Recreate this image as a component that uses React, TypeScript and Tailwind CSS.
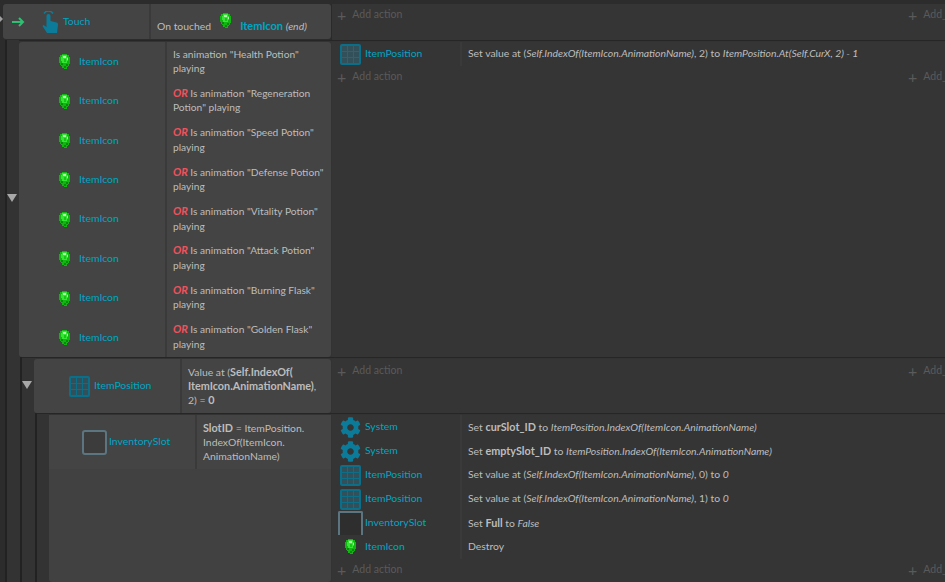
import type { ReactNode } from "react"
import { FaCog } from "react-icons/fa"

function Gem() {
  return (
    <svg width="11" height="15" viewBox="0 0 11 15" className="shrink-0" shapeRendering="crispEdges">
      <path d="M3 0h5v1h2v2h1v7h-1v2H9v1H8v2H5v-1H3v-2H2v-1H1V9H0V3h1V1h2z" fill="#12b512" />
      <path d="M3 1h5v2h1v4H8v2H3V7H2V3h1z" fill="#35e435" />
      <path d="M4 2h3v2H4zM8 4h1v2H8z" fill="#b6f9ae" />
      <path d="M2 9h2v2H2zM7 10h2v2H7zM5 12h2v2H5z" fill="#0a8a0a" />
      <path d="M5 5h2v3H5z" fill="#16c516" />
    </svg>
  )
}

function GridIcon() {
  return (
    <svg width="21" height="21" viewBox="0 0 21 21" className="shrink-0">
      <rect width="21" height="21" rx="2" fill="#0b6f8a" />
      {[2, 8, 14].map((y) =>
        [2, 8, 14].map((x) => <rect key={`${x}-${y}`} x={x} y={y} width="5" height="5" fill="#31505a" />),
      )}
    </svg>
  )
}

function SlotIcon({ small }: { small?: boolean }) {
  return (
    <div
      className={
        small
          ? "h-[24px] w-[25px] shrink-0 rounded-t-[2px] border-x-2 border-t-2 border-[#5b7681] bg-[#2e2e2e]"
          : "h-[25px] w-[25px] shrink-0 rounded-[3px] border-2 border-[#5b7681] bg-[#3c3c3c]"
      }
    />
  )
}

function TouchIcon() {
  return (
    <svg width="18" height="22" viewBox="0 0 18 22" className="shrink-0">
      <path d="M3 2.5a5.300 5.300 0 0 1 9 0" fill="none" stroke="#0c7b99" strokeWidth="1.500" />
      <path d="M5.500 5a2 2 0 0 1 4 0v5l6 1.500c1 .3 1.500 1 1.500 2L16 22H6L1.500 15l1-1 3 2z" fill="#0c7b99" />
    </svg>
  )
}

function AddRow({ className }: { className: string }) {
  return (
    <div className={`flex items-center justify-between pl-[5px] text-[10.5px] text-[#5a5a5a] ${className}`}>
      <span className="flex items-center gap-[6px]">
        <span className="text-[16px] leading-none">+</span>
        <span>Add action</span>
      </span>
      <span className="flex w-[37px] shrink-0 items-center gap-[6px] whitespace-nowrap">
        <span className="text-[16px] leading-none">+</span>
        <span>Add_</span>
      </span>
    </div>
  )
}

function Condition({ text }: { text: ReactNode }) {
  return (
    <div className="flex h-[39.4px]">
      <div className="flex w-[146px] shrink-0 items-center gap-[9px] pl-[40px]">
        <Gem />
        <span className="text-[10.4px] text-[#00a5c4]">ItemIcon</span>
      </div>
      <div className="flex-1 border-l-2 border-[#3a3a3a] pl-[6px] pt-[4.5px] text-[10.2px] leading-[14.5px] text-[#bdbdbd]">
        {text}
      </div>
    </div>
  )
}

function Or() {
  return <b className="text-[11px] font-bold italic text-[#f0525c]">OR </b>
}

function Strong({ children }: { children: ReactNode }) {
  return <b className="text-[10.8px] font-bold">{children}</b>
}

function Action({ icon, name, text }: { icon: ReactNode; name: string; text: ReactNode }) {
  return (
    <div className="flex h-[24px] items-center">
      <div className="flex w-[128px] shrink-0 items-center justify-between pl-[8px] pr-[2px]">
        <div className="flex w-[21px] items-center justify-center">{icon}</div>
        <span className="w-[93px] text-[10.4px] text-[#00a5c4]">{name}</span>
      </div>
      <div className="flex h-full flex-1 items-center border-l-2 border-[#3a3a3a] pl-[6px] text-[10.4px] text-[#bdbdbd]">
        {text}
      </div>
    </div>
  )
}

const setValue = (n: number) => (
  <span>
    Set value at (<i>Self.IndexOf(ItemIcon.AnimationName)</i>, {n}) to <i>0</i>
  </span>
)

const potions = ["Regeneration Potion", "Speed Potion", "Defense Potion", "Vitality Potion", "Attack Potion", "Burning Flask", "Golden Flask"]

export default function App() {
  return (
    <div className="relative h-[582px] w-[945px] overflow-hidden bg-[#2c2c2c] font-['Lato','Noto_Sans',sans-serif]">
      {/* collapse arrows */}
      <div className="absolute left-0 top-[16px] z-10 h-0 w-0 border-y-[3px] border-l-[3px] border-y-transparent border-l-[#a0a0a0]" />
      <div className="absolute left-[7px] top-[194px] z-10 h-0 w-0 border-x-[5px] border-t-[8px] border-x-transparent border-t-[#a8a8a8]" />
      <div className="absolute left-[22px] top-[381px] z-10 h-0 w-0 border-x-[5px] border-t-[8px] border-x-transparent border-t-[#a8a8a8]" />

      <div className="flex h-[40px] pt-[4px]">
        <div className="ml-[3px] flex h-[35px] w-[328px] shrink-0 rounded-[3px] bg-[#444444]">
          <div className="flex w-[146px] shrink-0 items-center">
            <svg width="14" height="10" viewBox="0 0 14 10" className="ml-[9px] shrink-0">
              <path d="M0 5h11M7 1l4 4-4 4" fill="none" stroke="#2fbf71" strokeWidth="2" />
            </svg>
            <div className="ml-[15px]">
              <TouchIcon />
            </div>
            <span className="ml-[4px] text-[10.4px] text-[#00a5c4]">Touch</span>
          </div>
          <div className="flex flex-1 items-center gap-[9px] border-l-2 border-[#3a3a3a] pl-[6px] pt-[2px] text-[10.4px] text-[#bdbdbd]">
            <span className="mt-[8px]">On touched</span>
            <span className="mb-[5px]">
              <Gem />
            </span>
            <span className="mt-[8px]">
              <b className="text-[11px] font-bold text-[#00a5c4]">ItemIcon</b> <i>(end)</i>
            </span>
          </div>
        </div>
        <div className="flex-1 border-l border-[#2a2a2a] bg-[#353535]">
          <AddRow className="h-[21px]" />
        </div>
      </div>

      <div className="ml-[5px] h-[542px] border-l-2 border-[#222222] bg-[#333333] pl-[12px]">
        <div className="flex h-[317px] border-t border-[#262626] pt-[1px]">
          <div className="w-[312px] shrink-0 rounded-[3px] bg-[#444444]">
            <Condition text={<>Is animation "Health Potion" playing</>} />
            {potions.map((p) => (
              <Condition key={p} text={<><Or />Is animation "{p}" playing</>} />
            ))}
          </div>
          <div className="ml-[1px] flex-1 bg-[#353535]">
            <Action
              icon={<GridIcon />}
              name="ItemPosition"
              text={
                <span>
                  Set value at (<i>Self.IndexOf(ItemIcon.AnimationName)</i>, 2) to <i>ItemPosition.At(Self.CurX, 2) - 1</i>
                </span>
              }
            />
            <AddRow className="h-[22px]" />
          </div>
        </div>

        <div className="ml-[1px] h-[225px] border-l-2 border-[#222222]">
          <div className="flex h-[56px] border-t border-[#262626] pt-[1px]">
            <div className="ml-[12px] flex h-[54px] w-[297px] shrink-0 rounded-[3px] bg-[#444444]">
              <div className="flex w-[146px] shrink-0 items-center gap-[4px] pl-[35px]">
                <GridIcon />
                <span className="text-[10.4px] text-[#00a5c4]">ItemPosition</span>
              </div>
              <div className="flex-1 border-l-2 border-[#3a3a3a] pl-[6px] pt-[6px] text-[10.4px] leading-[14px] text-[#bdbdbd]">
                Value at (<Strong>Self.IndexOf(</Strong>
                <br />
                <Strong>ItemIcon.AnimationName)</Strong>,
                <br />
                2) = <Strong>0</Strong>
              </div>
            </div>
            <div className="ml-[1px] flex-1 bg-[#353535]">
              <AddRow className="h-[24px]" />
            </div>
          </div>

          <div className="ml-[13px] h-[169px] border-l-2 border-[#222222] border-t border-t-[#262626]">
            <div className="flex h-[168px] pt-[1px]">
              <div className="ml-[12px] w-[282px] shrink-0 rounded-[3px] bg-[#414141]">
                <div className="flex h-[54px] bg-[#444444]">
                  <div className="flex w-[146px] shrink-0 items-center gap-[2px] pl-[33px]">
                    <SlotIcon />
                    <span className="text-[10.4px] text-[#00a5c4]">InventorySlot</span>
                  </div>
                  <div className="flex-1 border-l-2 border-[#3a3a3a] pl-[6px] pt-[6px] text-[10.4px] leading-[14px] text-[#bdbdbd]">
                    <Strong>SlotID</Strong> = ItemPosition.
                    <br />
                    IndexOf(ItemIcon.
                    <br />
                    AnimationName)
                  </div>
                </div>
              </div>
              <div className="ml-[1px] flex-1 bg-[#353535]">
                <Action
                  icon={<FaCog className="size-[21px] text-[#0c7b99]" />}
                  name="System"
                  text={<span>Set <Strong>curSlot_ID</Strong> to <i>ItemPosition.IndexOf(ItemIcon.AnimationName)</i></span>}
                />
                <Action
                  icon={<FaCog className="size-[21px] text-[#0c7b99]" />}
                  name="System"
                  text={<span>Set <Strong>emptySlot_ID</Strong> to <i>ItemPosition.IndexOf(ItemIcon.AnimationName)</i></span>}
                />
                <Action icon={<GridIcon />} name="ItemPosition" text={setValue(0)} />
                <Action icon={<GridIcon />} name="ItemPosition" text={setValue(1)} />
                <Action icon={<SlotIcon small />} name="InventorySlot" text={<span>Set <Strong>Full</Strong> to <i>False</i></span>} />
                <Action icon={<Gem />} name="ItemIcon" text="Destroy" />
                <AddRow className="h-[22px]" />
              </div>
            </div>
          </div>
        </div>
      </div>
    </div>
  )
}
